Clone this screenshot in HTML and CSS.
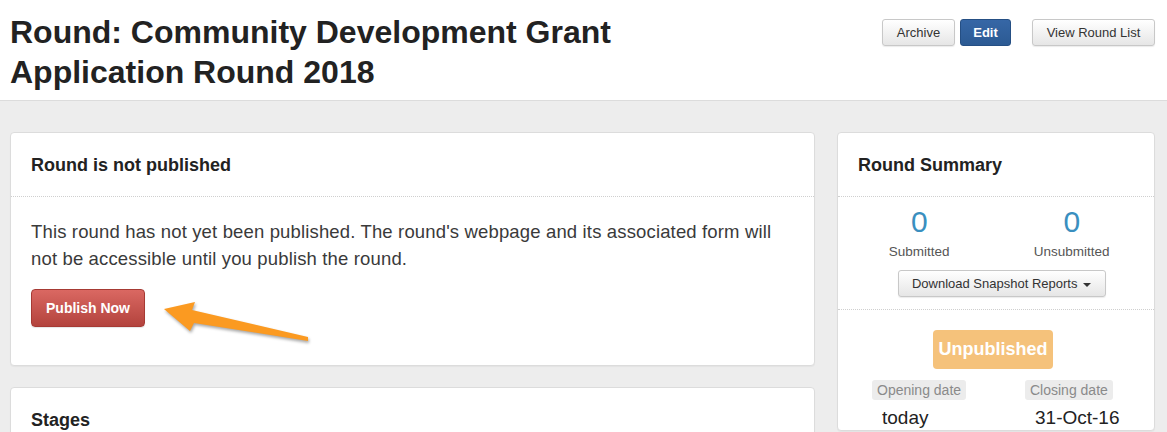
FILE: index.html
```html
<!DOCTYPE html>
<html>
<head>
<meta charset="utf-8">
<link rel="stylesheet" href="styles.css">
</head>
<body>
<header class="page-header">
  <h1 class="title">Round: Community Development Grant<br>Application Round 2018</h1>
  <div class="actions">
    <button class="btn btn-default btn-archive">Archive</button>
    <button class="btn btn-primary">Edit</button>
    <button class="btn btn-default btn-list">View Round List</button>
  </div>
</header>
<main class="content">
  <div class="main-col">
    <section class="card">
      <div class="card-head">Round is not published</div>
      <div class="card-body notice">
        <p class="notice-text">This round has not yet been published. The round's webpage and its associated form will not be accessible until you publish the round.</p>
        <button class="btn-danger">Publish Now</button>
        <svg class="arrow" width="170" height="60" viewBox="0 0 170 60">
          <polygon points="13,19 44,12 41,20 157,47 157,51 43,33 39,41" fill="#fb9a21"/>
        </svg>
      </div>
    </section>
    <section class="card">
      <div class="card-head">Stages</div>
      <div class="card-body stages-body"></div>
    </section>
  </div>
  <aside class="side-col">
    <section class="card">
      <div class="card-head">Round Summary</div>
      <div class="summary-stats">
        <div class="stats">
          <div class="stat"><span class="stat-num">0</span><span class="stat-label">Submitted</span></div>
          <div class="stat"><span class="stat-num">0</span><span class="stat-label">Unsubmitted</span></div>
        </div>
        <div class="download-row">
          <button class="btn btn-default btn-download">Download Snapshot Reports <span class="caret"></span></button>
        </div>
      </div>
      <div class="summary-status">
        <span class="badge">Unpublished</span>
        <div class="dates">
          <div class="date"><span class="date-label">Opening date</span><span class="date-value">today</span></div>
          <div class="date"><span class="date-label">Closing date</span><span class="date-value">31-Oct-16</span></div>
        </div>
      </div>
    </section>
  </aside>
</main>
</body>
</html>
```

FILE: styles.css
```css
html, body {
  margin: 0;
  padding: 0;
}
body {
  background: #ededed;
  font-family: "Liberation Sans", Arial, sans-serif;
  color: #222;
  overflow: hidden;
  height: 432px;
}
.page-header {
  background: #fff;
  border-bottom: 1px solid #dcdcdc;
  height: 101px;
  box-sizing: border-box;
  display: flex;
  justify-content: space-between;
  align-items: flex-start;
  padding: 0 12px 0 10px;
}
.title {
  margin: 12px 0 0 0;
  font-size: 32px;
  line-height: 40px;
  font-weight: bold;
  color: #222;
}
.actions {
  display: flex;
  margin-top: 19px;
}
.btn {
  font-family: "Liberation Sans", Arial, sans-serif;
  font-size: 13px;
  height: 27px;
  padding: 0;
  border-radius: 3px;
  cursor: pointer;
  box-sizing: border-box;
}
.btn-default {
  background: linear-gradient(#ffffff, #e6e6e6);
  border: 1px solid #c8c8c8;
  color: #333;
  box-shadow: 0 1px 1px rgba(0,0,0,0.08);
}
.btn-archive {
  width: 73px;
}
.btn-primary {
  background: linear-gradient(#3667a6, #2c5a93);
  border: 1px solid #254f84;
  color: #fff;
  font-weight: bold;
  margin-left: 5px;
  width: 51px;
}
.btn-list {
  margin-left: 21px;
  width: 123px;
}
.content {
  display: flex;
  gap: 22px;
  padding: 31px 12px 0 10px;
}
.main-col {
  width: 805px;
  display: flex;
  flex-direction: column;
  gap: 21px;
}
.side-col {
  width: 318px;
}
.card {
  background: #fff;
  border: 1px solid #dcdcdc;
  border-radius: 4px;
  box-shadow: 0 1px 1px rgba(0,0,0,0.04);
}
.card-head {
  height: 64px;
  box-sizing: border-box;
  padding: 2px 20px 0 20px;
  display: flex;
  align-items: center;
  font-size: 18px;
  font-weight: bold;
  color: #222;
  border-bottom: 1px dotted #cfcfcf;
}
.card-body {
  padding: 21px 20px 38px 20px;
}
.notice {
  position: relative;
}
.notice-text {
  margin: 0 0 17px 0;
  font-size: 18.5px;
  letter-spacing: 0.15px;
  line-height: 27px;
  color: #3a3a3a;
  max-width: 752px;
}
.btn-danger {
  font-family: "Liberation Sans", Arial, sans-serif;
  width: 114px;
  height: 38px;
  background: linear-gradient(#da6862, #b3433d);
  border: 1px solid #a63a34;
  border-radius: 4px;
  color: #fff;
  font-size: 14px;
  font-weight: bold;
  box-shadow: 0 1px 1px rgba(0,0,0,0.1);
}
.arrow {
  position: absolute;
  left: 140px;
  top: 93px;
  filter: drop-shadow(1px 2px 1.5px rgba(0,0,0,0.35));
}
.stages-body {
  height: 60px;
}
.summary-stats {
  padding: 8px 6px 12px 5px;
  border-bottom: 1px dotted #cfcfcf;
}
.stats {
  display: grid;
  grid-template-columns: 1fr 1fr;
}
.stat {
  display: flex;
  flex-direction: column;
  align-items: center;
}
.stat-num {
  font-size: 30px;
  line-height: 34px;
  color: #3a8fbf;
}
.stat-label {
  font-size: 13.5px;
  line-height: 18px;
  margin-top: 4px;
  color: #555;
}
.download-row {
  display: flex;
  justify-content: center;
  margin-top: 9px;
  padding-left: 12px;
}
.btn-download {
  width: 208px;
}
.caret {
  display: inline-block;
  width: 0;
  height: 0;
  border-left: 4px solid transparent;
  border-right: 4px solid transparent;
  border-top: 4px solid #333;
  vertical-align: middle;
  margin-left: 2px;
}
.summary-status {
  display: flex;
  flex-direction: column;
  align-items: center;
  padding-top: 20px;
}
.badge {
  background: #f5c27b;
  color: #fff;
  font-size: 18px;
  font-weight: bold;
  border-radius: 4px;
  width: 120px;
  height: 39px;
  display: flex;
  align-items: center;
  justify-content: center;
  margin-right: 6px;
}
.dates {
  display: grid;
  grid-template-columns: 153px 153px;
  width: 100%;
  box-sizing: border-box;
  padding-left: 34px;
  margin-top: 11px;
}
.date {
  display: flex;
  flex-direction: column;
  align-items: flex-start;
}
.date-label {
  background: #ececec;
  color: #8a8a8a;
  font-size: 14px;
  line-height: 20px;
  padding: 0 5px;
  border-radius: 3px;
}
.date-value {
  font-size: 19px;
  line-height: 24px;
  margin-top: 6px;
  margin-left: 10px;
  color: #222;
}
```
